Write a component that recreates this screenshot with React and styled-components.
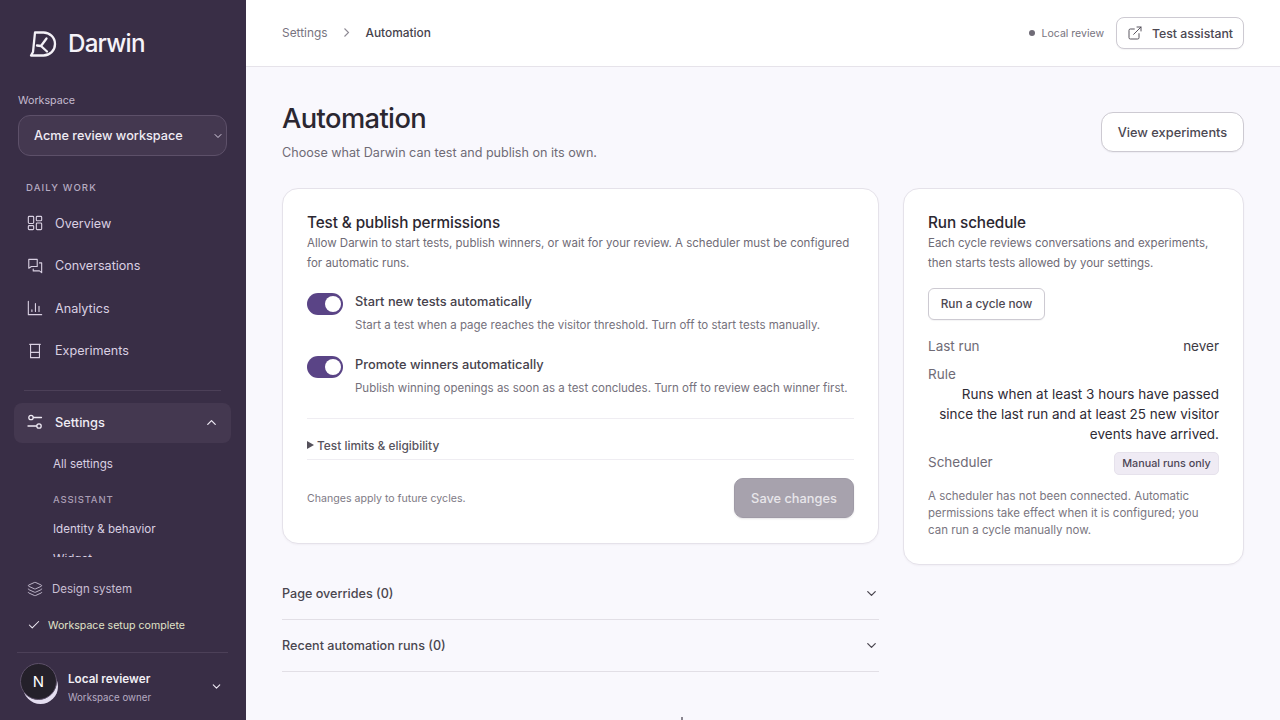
import React from "react";
import styled, { createGlobalStyle } from "styled-components";
import { ChevronDown, ChevronUp, ExternalLink, Check, Layers } from "lucide-react";

const Global = createGlobalStyle`
  * { box-sizing: border-box; }
  html, body { margin: 0; height: 100%; overflow: hidden; }
  body { font-family: Inter, "Liberation Sans", sans-serif; background: #f9f8fd; color: #2b2731; }
  button { font-family: inherit; }
`;

const Shell = styled.div`display: flex; width: 1280px; height: 720px; overflow: hidden;`;
const Sidebar = styled.aside`width: 246px; flex: none; height: 720px; background: #392e46; display: flex; flex-direction: column; color: #d9d0e2;`;
const Brand = styled.div`display: flex; gap: 11px; padding: 30px 0 0 29px; height: 90px; align-items: flex-start;`;
const BrandName = styled.span`font-size: 24.2px; font-weight: 500; letter-spacing: -0.8px; color: #f6f3f9; line-height: 28px;`;
const WorkspaceBlock = styled.div`padding: 0 19px 0 18px;`;
const WorkspaceLabel = styled.div`font-size: 10.7px; line-height: 14px; color: #c5bbcf; margin-bottom: 7px; margin-top: 4px;`;
const Select = styled.div`height: 41px; border: 1px solid #5d5069; border-radius: 12px; background: #443850; display: flex; align-items: center; justify-content: space-between; padding: 0 2px 0 15px; font-size: 12.7px; font-weight: 500; color: #f0ecf4;`;
const SectionLabel = styled.div`font-size: 9.6px; font-weight: 500; letter-spacing: 1.1px; color: #b6abc1; line-height: 12px; padding: 26px 0 0 26px;`;
const NavList = styled.nav`display: flex; flex-direction: column; padding: 4px 0 0 27px; margin-top: 4px;`;
const NavItem = styled.div`height: 42.5px; display: flex; align-items: center; gap: 12px; font-size: 12.6px; color: #d9d0e2;`;
const NavIcon = styled.span`width: 16px; height: 18px; display: flex; align-items: center; justify-content: center; flex: none;`;
const Divider = styled.div`height: 1px; background: #4c4058; margin: ${p => p.$m};`;
const SettingsRow = styled.div`margin: 0 15px 0 14px; height: 40px; border-radius: 8px; background: #443850; display: flex; align-items: center; padding: 0 12px 2px 13px; gap: 12px; font-size: 12.8px; font-weight: 500; color: #f0ecf4; justify-content: space-between;`;
const SettingsLead = styled.span`display: flex; align-items: center; gap: 12px;`;
const ScrollClip = styled.div`height: 114px; overflow: hidden; flex: none;`;
const SubItem = styled.div`font-size: 11.6px; line-height: 16px; color: #d9d0e2; padding-left: 53px; margin-top: ${p => p.$top}px;`;
const SubLabel = styled.div`font-size: 9.5px; font-weight: 500; letter-spacing: .8px; line-height: 12px; color: #a99eb5; padding-left: 53px; margin-top: 22px;`;
const SideFoot = styled.div`display: flex; align-items: center; font-size: 11.5px; color: #c9bfd3; padding-left: 27px; gap: 9px; height: 20px; margin-top: ${p => p.$top}px;`;
const SetupFoot = styled(SideFoot)`font-size: 10.6px; color: #e0e3c8; gap: 7px;`;
const UserRow = styled.div`display: flex; align-items: flex-start; padding: 10px 23px 0 20px;`;
const Avatar = styled.div`width: 37px; height: 37px; border-radius: 50%; background: #24202a; border: 1px solid #5d5069; color: #fff; font-size: 15px; font-weight: 400; display: flex; align-items: center; justify-content: center; box-shadow: 2px 5px 0 -1px #e4def0; flex: none;`;
const UserText = styled.div`margin-left: 11px; flex: 1; padding-top: 8px;`;
const UserName = styled.div`font-size: 11.7px; font-weight: 600; color: #f2eff5; line-height: 16px;`;
const UserRole = styled.div`font-size: 9.7px; color: #b6abc1; line-height: 14px; margin-top: 4px;`;
const UserChevron = styled.span`display: flex; margin-top: 17px;`;

const Main = styled.main`flex: 1; min-width: 0; height: 720px; overflow: hidden; display: flex; flex-direction: column;`;
const Header = styled.header`height: 67px; flex: none; background: #fff; border-bottom: 1px solid #e6e3ea; display: flex; align-items: center; justify-content: space-between; padding: 0 36px;`;
const Crumbs = styled.div`display: flex; align-items: center; font-size: 11.9px; color: #78747f; margin-top: -1px;`;
const CrumbSep = styled.span`display: flex; margin: 0 14.5px; color: #8d8993;`;
const CrumbNow = styled.span`color: #46424c; font-weight: 500;`;
const HeaderRight = styled.div`display: flex; align-items: center;`;
const StatusDot = styled.span`width: 6px; height: 6px; border-radius: 50%; background: #6f6b76; margin-right: 7px;`;
const StatusText = styled.span`font-size: 10.5px; color: #77737e; margin-right: 12px;`;
const OutlineButton = styled.button`display: flex; align-items: center; justify-content: center; gap: ${p => p.$gap || 0}px; width: ${p => p.$w}px; height: ${p => p.$h}px; border-radius: ${p => p.$r}px; margin-top: ${p => p.$top || 0}px; border: 1px solid #cdcad2; background: #fff; color: #4c4852; font-size: ${p => p.$fs}px; font-weight: 500; padding: 0; box-shadow: 0 1px 1px rgba(40,30,50,.05);`;
const Content = styled.div`padding: 36px 36px 0; display: flex; flex-direction: column;`;
const TitleRow = styled.div`display: flex; justify-content: space-between; align-items: flex-start; height: 85px;`;
const Title = styled.h1`margin: 1px 0 0; font-size: 27.3px; font-weight: 500; letter-spacing: -0.6px; line-height: 30px; color: #2b2731;`;
const Subtitle = styled.p`margin: 11px 0 0; font-size: 12.6px; line-height: 16px; color: #6f6b76;`;
const Columns = styled.div`display: grid; grid-template-columns: 597px 341px; gap: 24px; align-items: start;`;
const LeftCol = styled.div`display: flex; flex-direction: column;`;
const Card = styled.section`background: #fff; border: 1px solid #e5e2ea; border-radius: 16px; padding: 24px; box-shadow: 0 1px 2px rgba(40,30,50,.04); height: ${p => p.$h}px;`;
const CardTitle = styled.h2`margin: 0; font-size: 15.3px; font-weight: 500; line-height: 19px; letter-spacing: -0.1px; color: #2b2731;`;
const CardDesc = styled.p`margin: 2px 0 0; font-size: 11.5px; line-height: 19.5px; color: #6f6b76;`;
const ToggleRow = styled.div`display: flex; gap: 12px; margin-top: ${p => p.$top}px;`;
const Toggle = styled.span`position: relative; flex: none; width: 36px; height: 22px; border-radius: 11px; background: #5a4486;`;
const Knob = styled.span`position: absolute; right: 2px; top: 3px; width: 16px; height: 16px; border-radius: 50%; background: #fff;`;
const ToggleText = styled.div`padding-top: 1px;`;
const ToggleLabel = styled.div`font-size: 12.8px; font-weight: 500; line-height: 16px; color: #46424c;`;
const ToggleDesc = styled.div`font-size: 11.5px; line-height: 16px; color: #75717c; margin-top: 7px;`;
const SoftLine = styled.div`height: 1px; background: #efedf2; width: 547px; margin-top: ${p => p.$top || 0}px;`;
const Summary = styled.div`display: flex; align-items: center; gap: 3px; height: 40px; padding-top: 12px; font-size: 11.9px; font-weight: 500; color: #57535d;`;
const Tri = styled.span`width: 0; height: 0; border-left: 7px solid #55515b; border-top: 4px solid transparent; border-bottom: 4px solid transparent;`;
const CardFoot = styled.div`display: flex; align-items: center; justify-content: space-between; margin-top: 18px; width: 547px;`;
const FootNote = styled.span`font-size: 10.6px; color: #7e7a85;`;
const SaveButton = styled.button`width: 120px; height: 40px; border: 1px solid #9f9aa6; border-radius: 9px; background: #a7a2ad; color: #e8e6ea; font-size: 12.8px; font-weight: 500; padding: 0; box-shadow: 0 1px 2px rgba(40,30,50,.12);`;
const Accordions = styled.div`margin-top: 24px; width: 597px;`;
const Accordion = styled.div`height: 52px; display: flex; align-items: center; justify-content: space-between; border-bottom: 1px solid #e2dfe6; font-size: 12.6px; font-weight: 500; color: #4a464f;`;
const PeekMark = styled.span`width: 2px; height: 3px; background: #8a8690; margin: 45px 0 0 399px;`;
const KeyRow = styled.div`display: flex; justify-content: space-between; align-items: center; font-size: 13.5px; line-height: 20px; color: #3e3a44; margin-top: ${p => p.$top}px;`;
const KeyName = styled.span`color: #6f6b76;`;
const SchedulerName = styled(KeyName)`margin-top: -3px;`;
const RuleText = styled.div`text-align: right; font-size: 13.5px; line-height: 20px; color: #2f2b35;`;
const Badge = styled.span`width: 105px; height: 23px; border-radius: 5px; background: #efebf4; border: 1px solid #e6e2ec; color: #4d4656; font-size: 10.8px; font-weight: 500; display: flex; align-items: center; justify-content: center;`;
const NoteText = styled.p`margin: 13px 0 0; font-size: 11.5px; line-height: 17px; color: #7a7681;`;

const Logo = () => (
  <svg width="28" height="28" viewBox="0 0 28 28" fill="none" stroke="#f4f1f7" strokeWidth="2.3" strokeLinecap="round" strokeLinejoin="round">
    <path d="M6 2.500h8a11.500 11.500 0 0 1 12 11.500c0 6.500-5 11.500-11.500 11.500H2L4 22z" />
    <path d="M8 15.500l4 .5 5.500-7.500M12 16l6 5.500" />
  </svg>
);
const iconProps = { width: 18, height: 18, viewBox: "0 0 18 18", fill: "none", stroke: "#d9d0e2", strokeWidth: 1.25, strokeLinecap: "round", strokeLinejoin: "round" };
const Sq = () => <svg {...iconProps}><rect x="1.500" y="1.500" width="6" height="8" rx="1"/><rect x="10.500" y="1.500" width="6" height="5" rx="1"/><rect x="1.500" y="12" width="6" height="4.500" rx="1"/><rect x="10.500" y="9" width="6" height="7.500" rx="1"/></svg>;
const Chat = () => <svg {...iconProps}><path d="M2 1.500h9.500v8H5l-3 2z"/><path d="M14 5.500h2.500v11l-2.500-2H7v-2"/></svg>;
const Bars = () => <svg {...iconProps}><path d="M1.500 1.500v15h15M5.500 13v-2M9.500 13V4M13.500 13V7"/></svg>;
const Beaker = () => <svg {...iconProps}><path d="M3 1.500h12M4 1.500v15h10v-15M4 10.500h10"/></svg>;
const Sliders = () => <svg width="16" height="16" viewBox="0 0 16 16" fill="none" stroke="#eee9f3" strokeWidth="1.3" strokeLinecap="round"><circle cx="4" cy="3.500" r="2.200"/><circle cx="12" cy="12" r="2.200"/><path d="M6.500 3.500h8M1 12h8.500"/></svg>;

const navItems = [["Overview", <Sq />], ["Conversations", <Chat />], ["Analytics", <Bars />], ["Experiments", <Beaker />]];

export default function App() {
  return (
    <Shell>
      <Global />
      <Sidebar>
        <Brand><Logo /><BrandName>Darwin</BrandName></Brand>
        <WorkspaceBlock>
          <WorkspaceLabel>Workspace</WorkspaceLabel>
          <Select>Acme review workspace<ChevronDown size={12} color="#d9d0e2" /></Select>
        </WorkspaceBlock>
        <SectionLabel>DAILY WORK</SectionLabel>
        <NavList>
          {navItems.map(([t, i]) => <NavItem key={t}><NavIcon>{i}</NavIcon>{t}</NavItem>)}
        </NavList>
        <Divider $m="18px 25px 12px 24px" />
        <SettingsRow><SettingsLead><Sliders />Settings</SettingsLead><ChevronUp size={15} color="#eee9f3" /></SettingsRow>
        <ScrollClip>
          <SubItem $top={13}>All settings</SubItem>
          <SubLabel>ASSISTANT</SubLabel>
          <SubItem $top={15}>Identity &amp; behavior</SubItem>
          <SubItem $top={14}>Widget</SubItem>
        </ScrollClip>
        <SideFoot $top={22}><Layers size={16} color="#d0c7da" strokeWidth={1.3} />Design system</SideFoot>
        <SetupFoot $top={16}><Check size={14} color="#f0ecf4" strokeWidth={1.8} />Workspace setup complete</SetupFoot>
        <Divider $m="17px 18px 0 17px" />
        <UserRow>
          <Avatar>N</Avatar>
          <UserText><UserName>Local reviewer</UserName><UserRole>Workspace owner</UserRole></UserText>
          <UserChevron><ChevronDown size={13} color="#eee9f3" /></UserChevron>
        </UserRow>
      </Sidebar>
      <Main>
        <Header>
          <Crumbs>Settings<CrumbSep><svg width="9" height="11" viewBox="0 0 9 11" fill="none" stroke="#8d8993" strokeWidth="1.1"><path d="M2.500 1.500l4 4-4 4"/></svg></CrumbSep><CrumbNow>Automation</CrumbNow></Crumbs>
          <HeaderRight>
            <StatusDot /><StatusText>Local review</StatusText>
            <OutlineButton $w={128} $h={32} $r={8} $fs={12.3} $gap={9}><ExternalLink size={16} strokeWidth={1.4} />Test assistant</OutlineButton>
          </HeaderRight>
        </Header>
        <Content>
          <TitleRow>
            <div><Title>Automation</Title><Subtitle>Choose what Darwin can test and publish on its own.</Subtitle></div>
            <OutlineButton $w={143} $h={40} $r={12} $fs={12.8} $top={9}>View experiments</OutlineButton>
          </TitleRow>
          <Columns>
            <LeftCol>
              <Card $h={356}>
                <CardTitle>Test &amp; publish permissions</CardTitle>
                <CardDesc>Allow Darwin to start tests, publish winners, or wait for your review. A scheduler must be configured for automatic runs.</CardDesc>
                <ToggleRow $top={20}><Toggle><Knob /></Toggle><ToggleText><ToggleLabel>Start new tests automatically</ToggleLabel><ToggleDesc>Start a test when a page reaches the visitor threshold. Turn off to start tests manually.</ToggleDesc></ToggleText></ToggleRow>
                <ToggleRow $top={23}><Toggle><Knob /></Toggle><ToggleText><ToggleLabel>Promote winners automatically</ToggleLabel><ToggleDesc>Publish winning openings as soon as a test concludes. Turn off to review each winner first.</ToggleDesc></ToggleText></ToggleRow>
                <SoftLine $top={22} />
                <Summary><Tri />Test limits &amp; eligibility</Summary>
                <SoftLine />
                <CardFoot><FootNote>Changes apply to future cycles.</FootNote><SaveButton>Save changes</SaveButton></CardFoot>
              </Card>
              <Accordions>
                <Accordion>Page overrides (0)<ChevronDown size={15} /></Accordion>
                <Accordion>Recent automation runs (0)<ChevronDown size={15} /></Accordion>
              </Accordions>
              <PeekMark />
            </LeftCol>
            <Card $h={377}>
              <CardTitle>Run schedule</CardTitle>
              <CardDesc>Each cycle reviews conversations and experiments, then starts tests allowed by your settings.</CardDesc>
              <OutlineButton $w={117} $h={32} $r={6} $fs={11.8} $top={15}>Run a cycle now</OutlineButton>
              <KeyRow $top={16}><KeyName>Last run</KeyName>never</KeyRow>
              <KeyRow $top={8}><KeyName>Rule</KeyName></KeyRow>
              <RuleText>Runs when at least 3 hours have passed since the last run and at least 25 new visitor events have arrived.</RuleText>
              <KeyRow $top={8}><SchedulerName>Scheduler</SchedulerName><Badge>Manual runs only</Badge></KeyRow>
              <NoteText>A scheduler has not been connected. Automatic permissions take effect when it is configured; you can run a cycle manually now.</NoteText>
            </Card>
          </Columns>
        </Content>
      </Main>
    </Shell>
  );
}
